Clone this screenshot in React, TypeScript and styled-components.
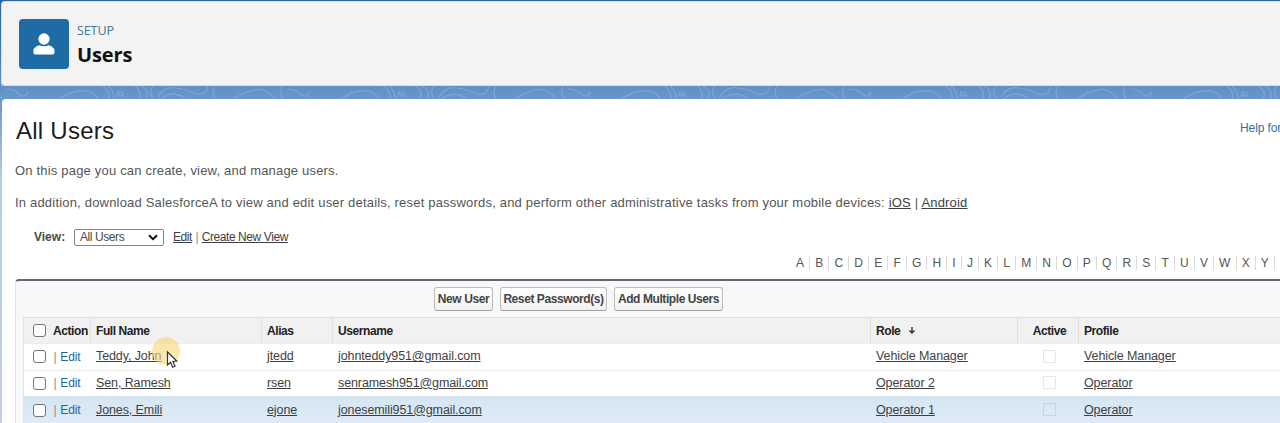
import React from "react";
import styled, { createGlobalStyle } from "styled-components";

const GlobalStyle = createGlobalStyle`
  * { box-sizing: border-box; }
  html, body { margin: 0; padding: 0; overflow: hidden; }
  body { font-family: "Liberation Sans", Arial, sans-serif; color: #4a4a4a; }
`;

const Page = styled.div`
  display: flex;
  flex-direction: column;
  width: 1280px;
  height: 423px;
  padding-left: 1px;
  background: linear-gradient(#2a68a6 0, #2a68a6 10px, #5f8fc6 86px, #6a98cb 100px, #b9cbe3 180px, #c3cfe2 423px);
  overflow: hidden;
`;

const Header = styled.header`
  display: flex;
  align-items: flex-start;
  flex: none;
  height: 85px;
  margin-top: 1px;
  padding: 18px 0 0 18px;
  background: #f3f3f3;
  border: 1px solid #dddbda;
  border-right: 0;
  border-radius: 4px 0 0 4px;
`;

const Tile = styled.div`
  display: flex;
  align-items: center;
  justify-content: center;
  width: 50px;
  height: 50px;
  margin: -1px 0 0 -1px;
  padding-right: 1px;
  border-radius: 4px;
  background: #1f6ba5;
`;

const Heading = styled.div`
  display: flex;
  flex-direction: column;
  margin-left: 8px;
  padding-top: 1px;
  font-family: "Open Sans", "Noto Sans", sans-serif;
`;

const Eyebrow = styled.span`
  font-size: 12.5px;
  line-height: 19px;
  letter-spacing: -0.1px;
  color: #39799f;
`;

const AppTitle = styled.h1`
  margin: 2px 0 0;
  font-size: 20px;
  line-height: 26px;
  font-weight: 700;
  letter-spacing: -0.1px;
  color: #111;
`;

const Waves = styled.svg`
  display: block;
  flex: none;
  width: 1280px;
  height: 13px;
`;

const Panel = styled.main`
  display: flex;
  flex-direction: column;
  flex: 1;
  min-height: 0;
  padding-left: 13px;
  background: #fff;
  border-radius: 4px 0 0 0;
  margin-left: 1px;
`;

const TitleRow = styled.div`
  display: flex;
  justify-content: space-between;
  height: 61px;
  padding: 18px 0 0 1px;
`;

const PageTitle = styled.h2`
  margin: 0;
  font-size: 24px;
  line-height: 28px;
  font-weight: 400;
  letter-spacing: 0.25px;
  color: #1c1c1c;
`;

const HelpLink = styled.a`
  width: 40px;
  overflow: hidden;
  white-space: nowrap;
  font-size: 12px;
  line-height: 22px;
  letter-spacing: -0.1px;
  color: #33709c;
`;

const Paragraph = styled.p`
  margin: 0;
  height: 31.5px;
  font-size: 13px;
  line-height: 21px;
  letter-spacing: 0.192px;
  white-space: nowrap;
  color: #555;
`;

const Link = styled.a`
  color: #3f3f3f;
  text-decoration: underline;
  text-underline-offset: 1px;
`;

const ViewRow = styled.div`
  display: flex;
  align-items: center;
  height: 18px;
  margin-top: 5px;
  padding-left: 19px;
  font-size: 12px;
  letter-spacing: -0.42px;
  white-space: pre;
`;

const ViewLabel = styled.label`
  width: 40px;
  font-weight: 700;
  letter-spacing: 0;
`;

const ViewSelect = styled.div`
  display: flex;
  align-items: center;
  justify-content: space-between;
  width: 90px;
  height: 17px;
  margin-right: 9px;
  padding: 0 5px;
  border: 1px solid #858585;
  border-radius: 2px;
`;

const Alphabet = styled.nav`
  display: flex;
  align-items: center;
  height: 14px;
  margin: 10px 0 9px 776px;
  font-size: 12px;
  color: #555;
  overflow: hidden;
`;

const Letter = styled.span`
  flex: none;
  padding: 0 5.1px;
  line-height: 14px;
  border-right: 1px solid #dadada;
`;

const List = styled.section`
  display: flex;
  flex-direction: column;
  flex: 1;
  padding-left: 7px;
  background: #f8f8f8;
  border-top: 2px solid #686377;
  border-left: 1px solid #e2e2e2;
  border-radius: 4px 0 0 0;
`;

const Buttons = styled.div`
  display: flex;
  gap: 7px;
  height: 36px;
  padding: 6px 0 0 411px;
`;

const Button = styled.button<{ $width: number }>`
  width: ${(p) => p.$width}px;
  height: 24px;
  padding: 0;
  font: 700 12px/20px "Liberation Sans", Arial, sans-serif;
  letter-spacing: -0.42px;
  white-space: nowrap;
  color: #444;
  background: linear-gradient(#fff, #f1f1f1);
  border: 1px solid #bcbcbc;
  border-bottom-color: #a0a0a0;
  border-radius: 3px;
`;

const Row = styled.div<{ $head?: boolean; $hover?: boolean }>`
  display: grid;
  grid-template-columns: 66px 171px 71px 538px 147px 61px 1fr;
  height: ${(p) => (p.$head ? 26 : 26.67)}px;
  flex: none;
  border-left: 1px solid #e0e0e0;
  border-top: 1px solid ${(p) => (p.$head ? "#e0e0e0" : p.$hover ? "#d6e5f0" : "#ececec")};
  background: ${(p) => (p.$head ? "#f1f1f1" : p.$hover ? "linear-gradient(#d5e6f3, #deebf6)" : "#fff")};
  color: #222;
  font-weight: ${(p) => (p.$head ? 700 : 400)};
`;

const Cell = styled.div<{ $head?: boolean; $center?: boolean }>`
  display: flex;
  align-items: center;
  justify-content: ${(p) => (p.$center ? "center" : "flex-start")};
  padding: 0 0 ${(p) => (p.$head ? 0 : 1)}px ${(p) => (p.$center ? 3 : 5)}px;
  font-size: ${(p) => (p.$head ? 12 : 12.5)}px;
  letter-spacing: ${(p) => (p.$head ? -0.42 : -0.1)}px;
  white-space: pre;
  border-left: 1px solid ${(p) => (p.$head ? "#e0e0e0" : "transparent")};
`;

const ActionCell = styled.div`
  display: flex;
  align-items: center;
  padding-left: 9px;
  font-size: 12px;
  letter-spacing: -0.1px;
  white-space: pre;
  color: #222;
`;

const ActionTitle = styled.span`
  letter-spacing: -0.42px;
`;

const Checkbox = styled.span`
  width: 13px;
  height: 13px;
  margin-right: 7px;
  border: 1px solid #757575;
  border-radius: 3px;
  background: #fff;
`;

const ActiveBox = styled.span`
  width: 13px;
  height: 13px;
  border: 1px solid rgba(90, 110, 130, 0.17);
  border-radius: 1px;
`;

const Divider = styled.span<{ $gap?: number }>`
  margin: 0 ${(p) => p.$gap ?? 0}px;
  color: #8d8d8d;
`;

const EditLink = styled.a`
  color: #1d669a;
`;

const SortArrow = styled.svg`
  margin-left: 8px;
`;

const Pointer = styled.div`
  position: absolute;
  left: 152px;
  top: 337px;
  width: 28px;
  height: 32px;
`;

const users = [
  { name: "Teddy, John", alias: "jtedd", email: "johnteddy951@gmail.com", role: "Vehicle Manager", profile: "Vehicle Manager" },
  { name: "Sen, Ramesh", alias: "rsen", email: "senramesh951@gmail.com", role: "Operator 2", profile: "Operator" },
  { name: "Jones, Emili", alias: "ejone", email: "jonesemili951@gmail.com", role: "Operator 1", profile: "Operator", hover: true },
];

export default function App() {
  return (
    <>
      <GlobalStyle />
      <Page>
        <Header>
          <Tile>
            <svg width="22" height="22" viewBox="0 0 22 22" fill="#fff">
              <ellipse cx="11" cy="6" rx="5.6" ry="5.8" />
              <path d="M6.800 12.200C3.500 12.700.4 14.800.4 18v1.500c0 1.200.9 2 2.100 2h17c1.200 0 2.100-.8 2.100-2V18c0-3.200-3.100-5.300-6.400-5.800C13.500 13.600 8.500 13.600 6.800 12.200z" />
            </svg>
          </Tile>
          <Heading>
            <Eyebrow>SETUP</Eyebrow>
            <AppTitle>Users</AppTitle>
          </Heading>
        </Header>
        <Waves viewBox="0 0 1280 13">
          <defs>
            <pattern id="contours" x="-67" width="281" height="13" patternUnits="userSpaceOnUse">
              <g fill="none" stroke="#a9c5e4" strokeOpacity=".36" strokeWidth="1.200">
                <path d="M67 0Q64 7 68 13M72 3Q82 3 86 9Q92 12 94 6" />
                <path d="M126 13Q139 3 154 5Q161 7 164 13" />
                <path d="M169 0Q176 6 175 13M174 0Q181 6 180 13M184 5L183 11" />
                <circle cx="187" cy="8" r="2" />
                <path d="M201 0Q209 6 205 13M207 0Q216 4 212 13M219 0Q214 6 219 12" />
                <path d="M224 11Q230 0 242 2Q252 3 262 8Q272 10 274 0" />
                <path d="M227 13Q238 4 251 12M281 0Q277 6 281 13" />
                <path d="M20 13Q26 6 45 3Q55 6 60 13M0 3Q-2 8 0 13" />
              </g>
            </pattern>
          </defs>
          <rect width="1280" height="13" fill="url(#contours)" />
        </Waves>
        <Panel>
          <TitleRow>
            <PageTitle>All Users</PageTitle>
            <HelpLink>Help for this Page</HelpLink>
          </TitleRow>
          <Paragraph>On this page you can create, view, and manage users.</Paragraph>
          <Paragraph>
            In addition, download SalesforceA to view and edit user details, reset passwords, and perform other
            administrative tasks from your mobile devices: <Link>iOS</Link> | <Link>Android</Link>
          </Paragraph>
          <ViewRow>
            <ViewLabel>View:</ViewLabel>
            <ViewSelect>
              All Users
              <svg width="10" height="7" viewBox="0 0 10 7" fill="none" stroke="#111" strokeWidth="2">
                <path d="M1 1.200L5 5.200L9 1.200" />
              </svg>
            </ViewSelect>
            <Link>Edit</Link>
            <Divider $gap={3.5}>|</Divider>
            <Link>Create New View</Link>
          </ViewRow>
          <Alphabet>
            {"ABCDEFGHIJKLMNOPQRSTUVWXYZ".split("").map((c) => (
              <Letter key={c}>{c}</Letter>
            ))}
          </Alphabet>
          <List>
            <Buttons>
              <Button $width={59}>New User</Button>
              <Button $width={107}>Reset Password(s)</Button>
              <Button $width={109}>Add Multiple Users</Button>
            </Buttons>
            <Row $head>
              <ActionCell>
                <Checkbox />
                <ActionTitle>Action</ActionTitle>
              </ActionCell>
              <Cell $head>Full Name</Cell>
              <Cell $head>Alias</Cell>
              <Cell $head>Username</Cell>
              <Cell $head>
                Role
                <SortArrow width="8" height="9" viewBox="0 0 8 9" fill="none" stroke="#333" strokeWidth="1.400">
                  <path d="M4 1V7M1.500 4.500L4 7L6.500 4.500" />
                </SortArrow>
              </Cell>
              <Cell $head $center>Active</Cell>
              <Cell $head>Profile</Cell>
            </Row>
            {users.map((u) => (
              <Row key={u.alias} $hover={u.hover}>
                <ActionCell>
                  <Checkbox />
                  <Divider $gap={0.5}>| </Divider>
                  <EditLink>Edit</EditLink>
                </ActionCell>
                <Cell><Link>{u.name}</Link></Cell>
                <Cell><Link>{u.alias}</Link></Cell>
                <Cell><Link>{u.email}</Link></Cell>
                <Cell><Link>{u.role}</Link></Cell>
                <Cell $center><ActiveBox /></Cell>
                <Cell><Link>{u.profile}</Link></Cell>
              </Row>
            ))}
          </List>
        </Panel>
      </Page>
      <Pointer>
        <svg width="28" height="32" viewBox="0 0 28 32">
          <circle cx="14" cy="14" r="14" fill="#f7d778" fillOpacity=".6" />
          <path d="M15.500 15V28L18.500 25.300L20.700 30.300L23 29.300L20.900 24.500L24.800 24.100Z" fill="#fff" stroke="#333" strokeWidth="1.200" />
        </svg>
      </Pointer>
    </>
  );
}
